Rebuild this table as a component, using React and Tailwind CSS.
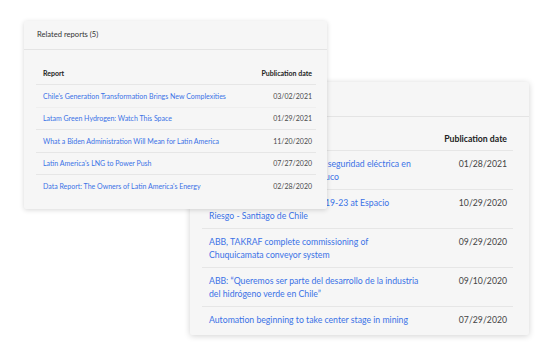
import React from "react";

const front = [
  ["Chile's Generation Transformation Brings New Complexities", "03/02/2021"],
  ["Latam Green Hydrogen: Watch This Space", "01/29/2021"],
  ["What a Biden Administration Will Mean for Latin America", "11/20/2020"],
  ["Latin America's LNG to Power Push", "07/27/2020"],
  ["Data Report: The Owners of Latin America's Energy", "02/28/2020"],
];

const back = [
  [["ABB presente en la Jornada de seguridad eléctrica en", "la Universidad Católica de Temuco"], "01/28/2021"],
  [["Meet us at Electric Week, Oct 19-23 at Espacio", "Riesgo - Santiago de Chile"], "10/29/2020"],
  [["ABB, TAKRAF complete commissioning of", "Chuquicamata conveyor system"], "09/29/2020"],
  [["ABB: \u201cQueremos ser parte del desarrollo de la industria", "del hidrógeno verde en Chile\u201d"], "09/10/2020"],
  [["Automation beginning to take center stage in mining"], "07/29/2020"],
];

export default function App() {
  return (
    <div
      className="relative w-[555px] h-[353px] bg-white overflow-hidden"
      style={{ fontFamily: "Lato, 'Open Sans', sans-serif" }}
    >
      {/* Back card */}
      <div className="absolute left-[190px] top-[82px] w-[339px] h-[253px] bg-[#f6f6f6] rounded-[2px] shadow-[0_1px_6px_rgba(0,0,0,0.18)] flex flex-col">
        <div className="h-[35px] border-b border-[#e4e4e4] px-[19px] flex items-center text-[10px] text-[#333]">
          Related content
        </div>
        <div className="pl-[12px] pr-[16px] pt-[8px] flex flex-col">
          <div className="h-[26px] flex items-end pb-[5px] border-b border-[#e6e6e6] px-[7px] pr-[6px] text-[8.7px] font-bold text-[#222]">
            <div className="flex-1">Report</div>
            <div>Publication date</div>
          </div>
          {back.map(([lines, date], i) => (
            <div
              key={i}
              className={`flex items-start pt-[6px] pb-[6px] px-[7px] pr-[6px] text-[8.7px] leading-[13px] ${i < back.length - 1 ? "border-b border-[#e6e6e6]" : ""}`}
            >
              <div className="flex-1 text-[#3a72e6]">
                {lines.map((l, j) => (
                  <div key={j} className="whitespace-nowrap">{l}</div>
                ))}
              </div>
              <div className="text-[#444]">{date}</div>
            </div>
          ))}
        </div>
      </div>

      {/* Front card */}
      <div className="absolute left-[24px] top-[21px] w-[303px] h-[188px] bg-[#f6f6f6] rounded-[2px] shadow-[0_1px_5px_rgba(0,0,0,0.16)] flex flex-col">
        <div className="h-[29px] border-b border-[#e4e4e4] pl-[13px] flex items-center text-[7.6px] text-[#333]">
          Related reports (5)
        </div>
        <div className="pl-[12px] pr-[11px] pt-[11px] flex flex-col">
          <div className="h-[24px] flex items-center pt-[1px] border-b border-[#e6e6e6] px-[7px] pr-[4px] text-[7px] font-bold text-[#222]">
            <div className="flex-1">Report</div>
            <div>Publication date</div>
          </div>
          {front.map(([t, d], i) => (
            <div
              key={i}
              className={`h-[22.5px] flex items-center px-[7px] pr-[4px] text-[7px] ${
                i === 0 ? "border-b border-[#efefef]" : i < front.length - 1 ? "border-b border-[#e6e6e6]" : ""
              }`}
            >
              <div className="flex-1 text-[#3a72e6] whitespace-nowrap">{t}</div>
              <div className="text-[#4a4a4a]">{d}</div>
            </div>
          ))}
        </div>
      </div>
    </div>
  );
}
